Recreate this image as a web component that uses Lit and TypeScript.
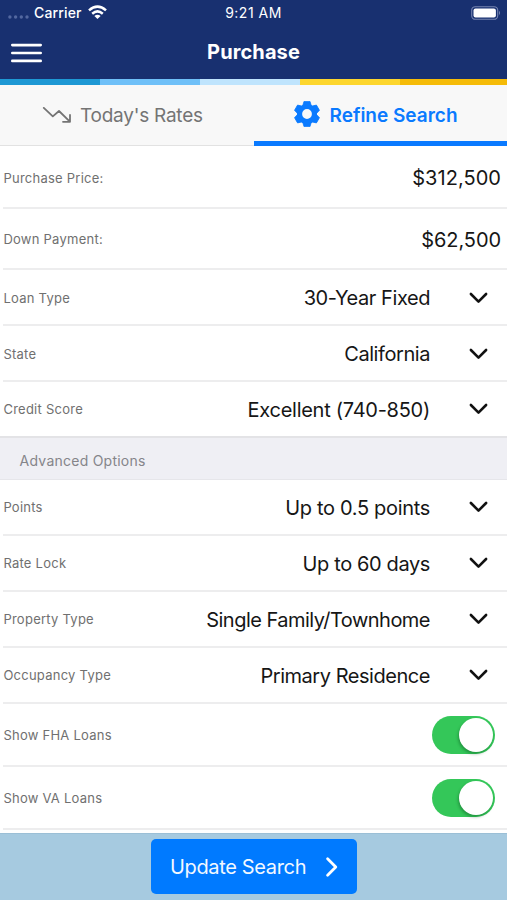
import { LitElement, html, css, svg } from "lit";
import { customElement, property } from "lit/decorators.js";
import { styleMap } from "lit/directives/style-map.js";

interface Row {
  label: string;
  value?: string;
  kind: "amount" | "select" | "toggle";
  height: number;
  tracking?: number;
}

const LOAN: Row[] = [
  { label: "Purchase Price:", value: "$312,500", kind: "amount", height: 62, tracking: 0.05 },
  { label: "Down Payment:", value: "$62,500", kind: "amount", height: 61.3, tracking: -0.08 },
  { label: "Loan Type", value: "30-Year Fixed", kind: "select", height: 56, tracking: -0.43 },
  { label: "State", value: "California", kind: "select", height: 55.7, tracking: -0.43 },
  { label: "Credit Score", value: "Excellent (740-850)", kind: "select", height: 56, tracking: -0.27 },
];

const ADVANCED: Row[] = [
  { label: "Points", value: "Up to 0.5 points", kind: "select", height: 56, tracking: -0.32 },
  { label: "Rate Lock", value: "Up to 60 days", kind: "select", height: 56, tracking: -0.38 },
  { label: "Property Type", value: "Single Family/Townhome", kind: "select", height: 56, tracking: -0.52 },
  { label: "Occupancy Type", value: "Primary Residence", kind: "select", height: 56, tracking: -0.46 },
  { label: "Show FHA Loans", kind: "toggle", height: 63 },
  { label: "Show VA Loans", kind: "toggle", height: 63 },
];

@customElement("option-row")
export class OptionRow extends LitElement {
  @property({ attribute: false }) row!: Row;

  static styles = css`
    :host { display: block; padding-left: 3px; }
    .row {
      box-sizing: border-box;
      height: 100%;
      display: flex;
      align-items: center;
      justify-content: space-between;
      border-bottom: 2px solid #ededee;
      white-space: nowrap;
    }
    .label { font-size: 13px; letter-spacing: 0.25px; color: #707070; padding: 1px 0 0 0.4px; }
    .end { display: flex; align-items: center; font-size: 20px; color: #161616; }
    .amount { padding-right: 6px; padding-top: 2px; }
    .select { gap: 38px; padding-right: 19px; padding-top: 2px; }
    .select svg { margin-top: -1px; }
    .toggle {
      box-sizing: border-box;
      width: 63px;
      height: 38px;
      margin: 1px 12px 0 0;
      padding-right: 2px;
      border-radius: 19px;
      background: #34c759;
      justify-content: flex-end;
    }
    .knob { width: 34px; height: 34px; border-radius: 50%; background: #fff; box-shadow: -1px 2px 3px rgba(0, 60, 20, 0.35); }
    svg { display: block; }
  `;

  private end() {
    const track = styleMap({ letterSpacing: `${this.row.tracking ?? 0}px` });
    switch (this.row.kind) {
      case "amount":
        return html`<div class="end amount"><span style=${track}>${this.row.value}</span></div>`;
      case "select":
        return html`<div class="end select">
          <span style=${track}>${this.row.value}</span>
          <svg width="20" height="14" viewBox="0 0 20 14" fill="none" stroke="#111" stroke-width="2.6" stroke-linecap="round" stroke-linejoin="round">
            <path d="M2.9 3l7.6 7.6L18.1 3" />
          </svg>
        </div>`;
      default:
        return html`<div class="end toggle"><div class="knob"></div></div>`;
    }
  }

  render() {
    return html`<div class="row"><span class="label">${this.row.label}</span>${this.end()}</div>`;
  }
}

const tooth = (angle: number) =>
  svg`<path d="M-4.2 -8.5L-3 -12.6H3L4.2 -8.5Z" transform="rotate(${angle})" stroke-width="0.8" stroke-linejoin="round" />`;

@customElement("app-root")
export class AppRoot extends LitElement {
  static styles = css`
    :host {
      display: flex;
      flex-direction: column;
      height: 900px;
      overflow: hidden;
      background: #fff;
      font-family: Inter, "Liberation Sans", sans-serif;
    }
    svg { display: block; flex: none; }
    .top { height: 79px; background: #183070; color: #fff; }
    .status { box-sizing: border-box; padding-bottom: 1px; display: grid; grid-template-columns: 1fr auto 1fr; align-items: center; height: 26px; font-size: 14px; }
    .carrier { display: flex; align-items: center; padding-left: 8px; font-weight: 500; letter-spacing: 0.15px; }
    .time { letter-spacing: 0.5px; }
    .dots { margin: 8px 5px 0 0; }
    .wifi { margin-left: 6px; }
    .battery { justify-self: end; margin-right: 6px; }
    .nav { display: grid; grid-template-columns: 1fr auto 1fr; align-items: center; height: 53px; }
    .menu { margin-left: 11px; }
    .title { font-size: 20px; font-weight: 700; letter-spacing: 0.1px; padding-bottom: 2px; }
    .stripe { display: grid; grid-template-columns: 100px 100px 100px 100px 1fr; height: 6px; }
    .c1 { background: #1e98d4; }
    .c2 { background: #6fc0f8; }
    .c3 { background: #bfe4fd; }
    .c4 { background: #fdd62e; }
    .c5 { background: #f5bb08; }
    .tabs { display: grid; grid-template-columns: 254px 253px; height: 61px; margin-bottom: 1px; }
    .tab {
      box-sizing: border-box;
      display: flex;
      align-items: center;
      background: #f8f8f8;
      border-bottom: 1px solid #e2e2e2;
      font-size: 19px;
      color: #747474;
      white-space: nowrap;
    }
    .rates { padding-left: 42px; gap: 8px; letter-spacing: -0.24px; padding-top: 1px; }
    .refine { padding-left: 40px; gap: 9.5px; border-bottom: 5px solid #0a7aff; padding-top: 4px; color: #0a7aff; font-weight: 600; }
    .refine svg { margin-bottom: 2px; }
    .section {
      box-sizing: border-box;
      height: 44px;
      margin-top: -2px;
      padding: 5px 0 0 19.6px;
      display: flex;
      align-items: center;
      position: relative;
      background: #efeff4;
      border-top: 2px solid #e3e3e6;
      border-bottom: 1px solid #e6e6ea;
      color: #85858a;
      font-size: 14px;
      letter-spacing: 0.24px;
    }
    .footer { box-sizing: border-box; flex: 1; margin-top: 3px; border-top: 1px solid #9bbfd6; background: #a6cae0; display: flex; justify-content: center; padding-top: 5px; }
    .button {
      box-sizing: border-box;
      width: 206px;
      height: 55px;
      border: 0;
      border-radius: 5px;
      padding: 1px 18px 0 19.5px;
      display: flex;
      align-items: center;
      justify-content: space-between;
      background: #007aff;
      color: #f2f8ff;
      font: 400 20px Inter, sans-serif;
      letter-spacing: -0.34px;
      white-space: nowrap;
    }
  `;

  private rows(list: Row[]) {
    return list.map((r) => html`<option-row .row=${r} style=${styleMap({ height: r.height + "px" })}></option-row>`);
  }

  render() {
    return html`
      <header class="top">
        <div class="status">
          <div class="carrier">
            <svg class="dots" width="21" height="4" viewBox="0 0 21 4" fill="#5368a0">
              <circle cx="1.9" cy="2" r="1.7" /><circle cx="7.6" cy="2" r="1.7" /><circle cx="13.3" cy="2" r="1.7" /><circle cx="19" cy="2" r="1.7" />
            </svg>
            <span class="name">Carrier</span>
            <svg class="wifi" width="19" height="15" viewBox="0 0 19 15" fill="none" stroke="#fff" stroke-width="2.5">
              <path d="M1 5.4Q9.5 -2.2 18 5.4" /><path d="M4.2 8.7Q9.5 4.1 14.8 8.7" />
              <path d="M6.4 10.9Q9.5 8.4 12.6 10.9L9.5 14Z" fill="#fff" stroke="none" />
            </svg>
          </div>
          <span class="time">9:21 AM</span>
          <svg class="battery" width="30" height="14" viewBox="0 0 30 14">
            <rect x="0.7" y="0.7" width="26" height="12.6" rx="3.6" fill="none" stroke="#7584b0" stroke-width="1.1" />
            <rect x="2.5" y="2.5" width="22.4" height="9" rx="2" fill="#fff" />
            <path d="M28 4.8Q30 7 28 9.2Z" fill="#7584b0" />
          </svg>
        </div>
        <div class="nav">
          <svg class="menu" width="31" height="20" viewBox="0 0 31 20" stroke="#fff" stroke-width="2.6" stroke-linecap="round">
            <path d="M1.3 2.1H29.7M1.3 10H29.7M1.3 17.9H29.7" />
          </svg>
          <span class="title">Purchase</span>
        </div>
      </header>
      <div class="stripe"><i class="c1"></i><i class="c2"></i><i class="c3"></i><i class="c4"></i><i class="c5"></i></div>
      <nav class="tabs">
        <div class="tab rates">
          <svg width="30" height="18" viewBox="0 0 30 18" fill="none" stroke="#747474" stroke-width="1.8" stroke-linecap="round" stroke-linejoin="round">
            <path d="M1.8 0.9L10.8 9.4L17 4L27.6 14.4M28 8V14.8H21" />
          </svg>
          <span>Today's Rates</span>
        </div>
        <div class="tab refine">
          <svg width="26" height="26" viewBox="-13 -13 26 26" fill="#0a7aff" stroke="#0a7aff">
            <circle r="7.5" fill="none" stroke-width="5.2" />
            ${[0, 60, 120, 180, 240, 300].map(tooth)}
          </svg>
          <span>Refine Search</span>
        </div>
      </nav>
      ${this.rows(LOAN)}
      <div class="section"><span>Advanced Options</span></div>
      ${this.rows(ADVANCED)}
      <footer class="footer">
        <button class="button">
          <span>Update Search</span>
          <svg width="14" height="22" viewBox="0 0 14 22" fill="none" stroke="#fff" stroke-width="2.8" stroke-linecap="round" stroke-linejoin="round">
            <path d="M2.6 2.8L10.8 11L2.6 19.2" />
          </svg>
        </button>
      </footer>
    `;
  }
}
